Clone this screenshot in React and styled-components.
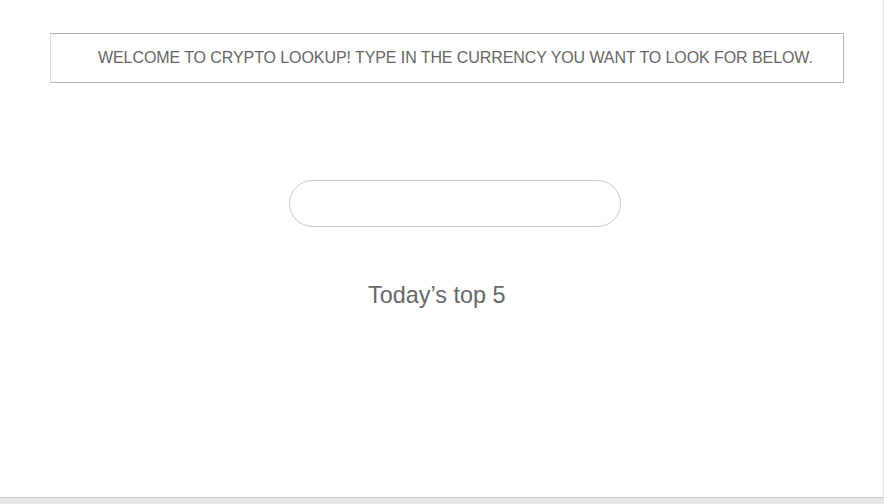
import React, { useState } from 'react';
import styled, { createGlobalStyle } from 'styled-components';

const GlobalStyle = createGlobalStyle`
  html, body {
    margin: 0;
    padding: 0;
    background: #e6e6e6;
    font-family: "Liberation Sans", Arial, sans-serif;
  }
`;

const Page = styled.div`
  box-sizing: border-box;
  width: 884px;
  height: 498px;
  background: #fff;
  border-right: 1px solid #dedede;
  border-bottom: 1px solid #c6c6c6;
  padding-top: 33px;
  display: flex;
  flex-direction: column;
`;

const Banner = styled.div`
  box-sizing: border-box;
  margin-left: 50px;
  width: 794px;
  height: 50px;
  border: 1px solid #b4b4b4;
  border-left-color: #dadada;
  padding-left: 47px;
  display: flex;
  align-items: center;
  color: #666;
  font-size: 16px;
  letter-spacing: -0.08px;
  white-space: nowrap;
`;

const Search = styled.input`
  box-sizing: border-box;
  margin: 97px 0 0 289px;
  width: 332px;
  height: 47px;
  border: 1px solid #c8c8c8;
  border-radius: 24px;
  outline: none;
  padding: 0 20px;
  font-size: 16px;
  font-family: inherit;
  color: #555;
`;

const Heading = styled.h2`
  margin: 55px 0 0 368px;
  font-size: 23.4px;
  font-weight: normal;
  color: #686868;
`;

export default function App() {
  const [query, setQuery] = useState('');
  return (
    <>
      <GlobalStyle />
      <Page>
        <Banner>WELCOME TO CRYPTO LOOKUP! TYPE IN THE CURRENCY YOU WANT TO LOOK FOR BELOW.</Banner>
        <Search value={query} onChange={(e) => setQuery(e.target.value)} />
        <Heading>Today’s top 5</Heading>
      </Page>
    </>
  );
}
